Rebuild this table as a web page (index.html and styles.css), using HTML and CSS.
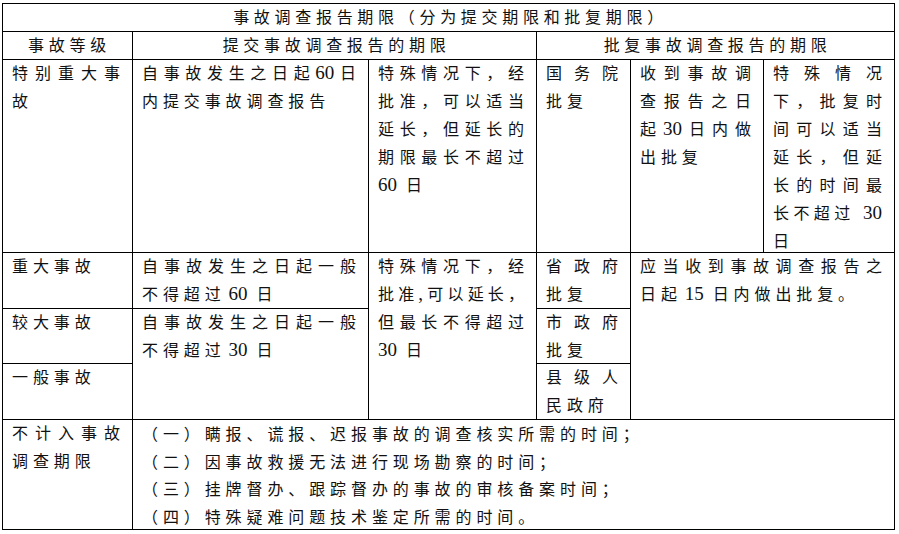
FILE: index.html
```html
<!DOCTYPE html>
<html lang="zh-CN">
<head>
<meta charset="utf-8">
<title>事故调查报告期限</title>
<link rel="stylesheet" href="styles.css">
</head>
<body>
<div class="sheet">
  <div class="cell head title">事故调查报告期限（分为提交期限和批复期限）</div>

  <div class="cell head">事故等级</div>
  <div class="cell head span2">提交事故调查报告的期限</div>
  <div class="cell head span3">批复事故调查报告的期限</div>

  <div class="cell"><div class="j">特别重大事</div><div>故</div></div>
  <div class="cell"><div class="j">自事故发生之日起<span class="n">60</span>日</div><div>内提交事故调查报告</div></div>
  <div class="cell"><div class="j">特殊情况下，经</div><div class="j">批准，可以适当</div><div class="j">延长，但延长的</div><div class="j">期限最长不超过</div><div><span class="n">60</span> 日</div></div>
  <div class="cell"><div class="j">国务院</div><div>批复</div></div>
  <div class="cell"><div class="j">收到事故调</div><div class="j">查报告之日</div><div class="j">起<span class="n">30</span>日内做</div><div>出批复</div></div>
  <div class="cell"><div class="j">特殊情况</div><div class="j">下，批复时</div><div class="j">间可以适当</div><div class="j">延长，但延</div><div class="j">长的时间最</div><div class="j">长不超过 <span class="n">30</span></div><div>日</div></div>

  <div class="cell">重大事故</div>
  <div class="cell"><div class="j">自事故发生之日起一般</div><div>不得超过<span class="n gap">60</span> 日</div></div>
  <div class="cell rows3"><div class="j">特殊情况下，经</div><div class="j">批准<span class="n">,</span>可以延长，</div><div class="j">但最长不得超过</div><div><span class="n">30</span> 日</div></div>
  <div class="cell"><div class="j">省政府</div><div>批复</div></div>
  <div class="cell span2 rows3"><div class="j">应当收到事故调查报告之</div><div>日起<span class="n gap">15</span> 日内做出批复。</div></div>

  <div class="cell">较大事故</div>
  <div class="cell rows2"><div class="j">自事故发生之日起一般</div><div>不得超过<span class="n gap">30</span> 日</div></div>
  <div class="cell"><div class="j">市政府</div><div>批复</div></div>

  <div class="cell">一般事故</div>
  <div class="cell"><div class="j">县级人</div><div>民政府</div></div>

  <div class="cell"><div class="j">不计入事故</div><div>调查期限</div></div>
  <div class="cell span5 list">
    <div>（一）瞒报、谎报、迟报事故的调查核实所需的时间；</div>
    <div>（二）因事故救援无法进行现场勘察的时间；</div>
    <div>（三）挂牌督办、跟踪督办的事故的审核备案时间；</div>
    <div>（四）特殊疑难问题技术鉴定所需的时间。</div>
  </div>
</div>
</body>
</html>
```
FILE: styles.css
```css
html, body {
  margin: 0;
  padding: 0;
  background: #ffffff;
}

body {
  font-family: "Liberation Serif", "Noto Sans CJK SC", serif;
  font-size: 16px;
  color: #111111;
}

.sheet {
  box-sizing: border-box;
  width: 893px;
  margin: 3px 0 0 2px;
  display: grid;
  grid-template-columns: 130px 236px 168px 94px 133px 131px;
  grid-template-rows: 28px 28px 193px 56px 55px 56px 110px;
  border-left: 1px solid #000;
  border-top: 1px solid #000;
}

.cell {
  border-right: 1px solid #000;
  border-bottom: 1px solid #000;
  padding: 0 12px 0 9px;
  line-height: 28px;
  letter-spacing: 4.9px;
  white-space: nowrap;
  overflow: hidden;
}

.head {
  text-align: center;
  padding: 0 0 0 4px;
  line-height: 27px;
  letter-spacing: 4.7px;
}

.title { grid-column: span 6; }
.span2 { grid-column: span 2; }
.span3 { grid-column: span 3; }
.span5 { grid-column: span 5; }
.rows2 { grid-row: span 2; }
.rows3 { grid-row: span 3; }

.j {
  letter-spacing: 0;
  text-align: justify;
  text-align-last: justify;
}

.n {
  font-size: 19px;
  line-height: 20px;
  letter-spacing: 0;
}

.gap {
  margin-left: 3px;
}

.list {
  line-height: 27.5px;
  padding-top: 1px;
}
```
